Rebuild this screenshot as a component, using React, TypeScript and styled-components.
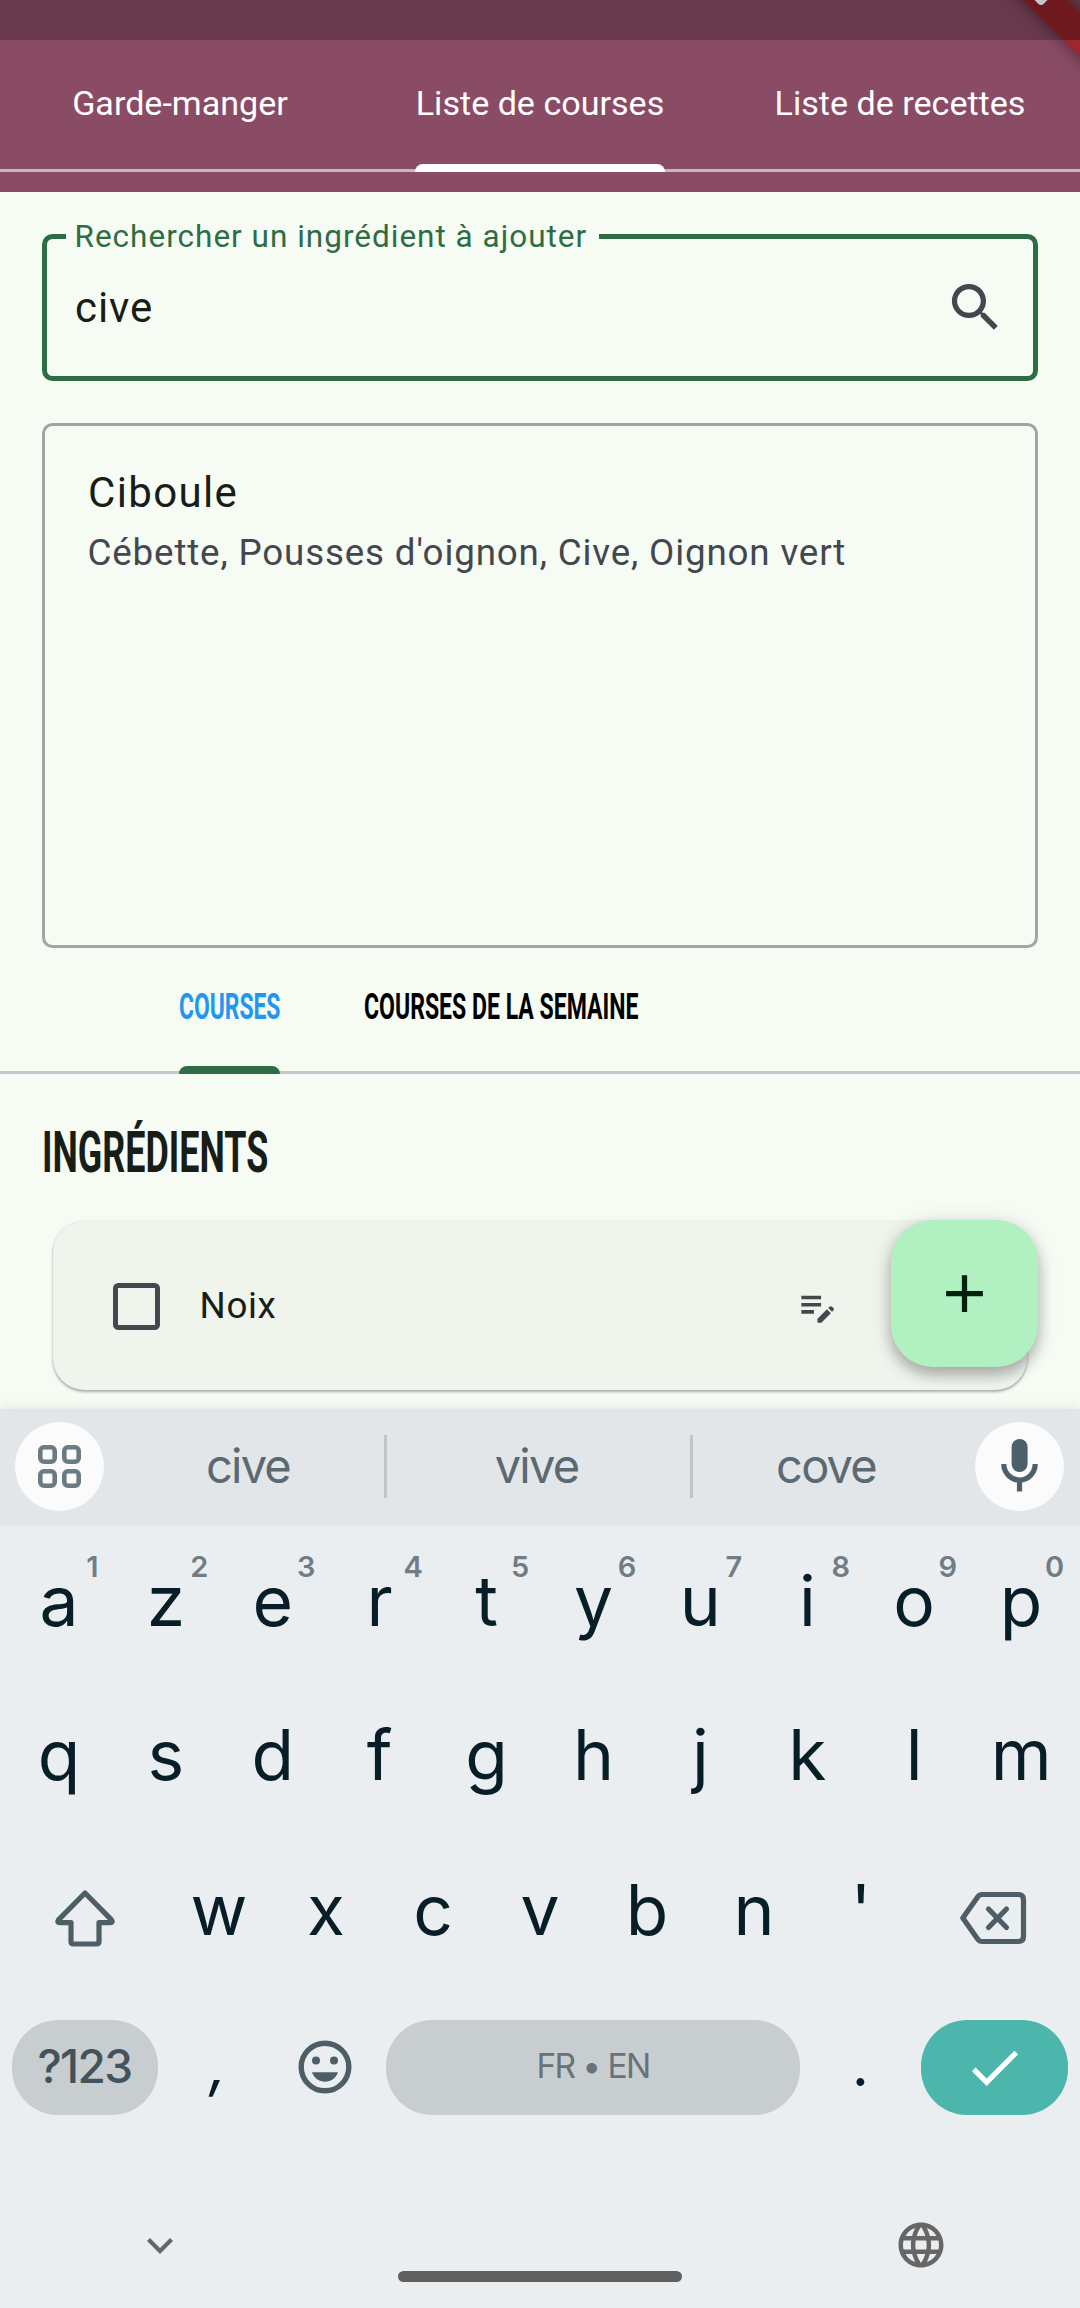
import React from "react";
import styled, { createGlobalStyle } from "styled-components";

const GlobalStyle = createGlobalStyle`
  * { box-sizing: border-box; }
  html, body { margin: 0; padding: 0; background: #ebeef1; }
  body { font-family: Roboto, "Liberation Sans", sans-serif; }
`;

const Screen = styled.div`
  position: relative;
  display: flex;
  flex-direction: column;
  width: 1080px;
  height: 2308px;
  overflow: hidden;
  background: #f6fbf4;
`;

/* ---------- Header ---------- */

const Header = styled.header`
  height: 192px;
  flex: none;
  background: #8a4b65;
`;

const StatusBar = styled.div`
  height: 40px;
  background: #68384b;
`;

const HeaderTabs = styled.nav`
  display: flex;
  height: 131.5px;
  border-bottom: 3px solid #c0b9c8;
`;

const HeaderTab = styled.div`
  flex: 1;
  display: flex;
  justify-content: center;
`;

const HeaderTabLabel = styled.span<{ $active?: boolean }>`
  position: relative;
  height: 131.5px;
  padding-top: 1px;
  line-height: 125px;
  font-size: 34.1px;
  white-space: nowrap;
  color: #fff;
  &::after {
    content: "";
    display: ${(p) => (p.$active ? "block" : "none")};
    position: absolute;
    left: -1px;
    right: -1px;
    bottom: 0;
    height: 8px;
    border-radius: 8px 8px 0 0;
    background: #fff;
  }
`;

const RibbonClip = styled.div`
  position: absolute;
  top: 0;
  right: 0;
  width: 140px;
  height: 120px;
  overflow: hidden;
`;

const Ribbon = styled.div`
  position: absolute;
  left: 6px;
  top: -15.5px;
  width: 200px;
  height: 31px;
  transform: rotate(45deg);
  background: #9d262f;
  box-shadow: 0 0 16px rgba(0, 0, 0, 0.45);
`;

const RibbonShade = styled.div`
  position: absolute;
  inset: 0 0 auto 0;
  height: 40px;
  overflow: hidden;
`;

const RibbonDark = styled(Ribbon)`
  background: #6f1a1e;
  box-shadow: none;
`;

const RibbonMark = styled.div`
  position: absolute;
  left: 95px;
  top: -8px;
  width: 12px;
  height: 12px;
  border-radius: 4px;
  transform: rotate(45deg);
  background: #c9c5c6;
`;

/* ---------- Body ---------- */

const Main = styled.main`
  position: relative;
  height: 1217px;
  flex: none;
  overflow: hidden;
  padding-top: 42px;
`;

const SearchField = styled.div`
  position: relative;
  display: flex;
  align-items: center;
  justify-content: space-between;
  height: 147px;
  margin: 0 42px;
  padding: 0 26.5px 0 28px;
  border: 5.25px solid #2e6d44;
  border-radius: 10.5px;
`;

const SearchLabel = styled.label`
  position: absolute;
  left: 19px;
  top: -22px;
  width: 533px;
  padding-left: 8.5px;
  line-height: 39px;
  font-size: 31.5px;
  letter-spacing: 1px;
  white-space: nowrap;
  color: #2e6d44;
  background: #f6fbf4;
`;

const SearchValue = styled.span`
  font-size: 42px;
  line-height: 60px;
  letter-spacing: 0.9px;
  color: #191d17;
`;

const Icon = styled.svg<{ $size: number }>`
  display: block;
  flex: none;
  width: ${(p) => p.$size}px;
  height: ${(p) => p.$size}px;
`;

const Results = styled.section`
  height: 525px;
  margin: 42px 42px 0;
  padding: 35px 42.5px;
  border: 3px solid #a3a5a2;
  border-radius: 10.5px;
`;

const ResultTitle = styled.div`
  padding-left: 0.5px;
  font-size: 42px;
  line-height: 64px;
  letter-spacing: 1.35px;
  color: #191d17;
`;

const ResultAliases = styled.div`
  font-size: 36.75px;
  line-height: 55px;
  letter-spacing: 0.84px;
  white-space: nowrap;
  color: #43474e;
`;

const ListTabs = styled.nav`
  display: flex;
  gap: 84px;
  height: 126px;
  padding-left: 178.5px;
  border-bottom: 3px solid #c3c8d0;
`;

const ListTab = styled.div<{ $active?: boolean; $width: number }>`
  position: relative;
  width: ${(p) => p.$width}px;
  height: 126px;
  padding-top: 36.5px;
  color: ${(p) => (p.$active ? "#2196f3" : "#000")};
  &::after {
    content: "";
    display: ${(p) => (p.$active ? "block" : "none")};
    position: absolute;
    left: 0;
    right: 0;
    bottom: 0;
    height: 8px;
    border-radius: 8px 8px 0 0;
    background: #2e6d44;
  }
`;

const Condensed = styled.span<{ $size: number; $stretch: number }>`
  display: block;
  width: max-content;
  font-size: ${(p) => p.$size}px;
  line-height: 44px;
  font-weight: 700;
  white-space: nowrap;
  transform: scaleX(${(p) => p.$stretch});
  transform-origin: left center;
`;

const SectionTitle = styled.h2`
  margin: 57px 0 0 42px;
  height: 90px;
  color: #191d17;
`;

const ItemCard = styled.article`
  display: flex;
  align-items: center;
  width: 974px;
  height: 169px;
  margin-left: 53px;
  padding: 1px 0 0 60px;
  border-radius: 31.5px;
  background: #eff4ed;
  box-shadow: 0 2px 3px rgba(0, 0, 0, 0.3), 0 0 2px rgba(0, 0, 0, 0.1);
`;

const Checkbox = styled.span`
  width: 47px;
  height: 47px;
  flex: none;
  border: 5.25px solid #43474e;
  border-radius: 5.25px;
`;

const ItemName = styled.span`
  width: 636px;
  flex: none;
  padding: 0 0 1px 39.5px;
  font-size: 36.75px;
  letter-spacing: 0.66px;
  color: #191d17;
`;

const Fab = styled.button`
  position: absolute;
  left: 891px;
  top: 1028px;
  display: flex;
  align-items: center;
  justify-content: center;
  width: 147px;
  height: 147px;
  padding: 0;
  border: 0;
  border-radius: 42px;
  background: #b1f1c1;
  box-shadow: 0 8px 14px rgba(0, 0, 0, 0.24), 0 3px 22px rgba(0, 0, 0, 0.13);
`;

/* ---------- Keyboard ---------- */

const Keyboard = styled.section`
  position: relative;
  display: flex;
  flex-direction: column;
  flex: 1;
  background: #ebeef1;
  box-shadow: 0 0 12px rgba(0, 0, 0, 0.1);
  font-family: Inter, Roboto, sans-serif;
`;

const Suggestions = styled.div`
  display: flex;
  align-items: center;
  height: 116px;
  padding: 0 15px 1px;
  background: #e3e6e9;
`;

const RoundButton = styled.span`
  display: flex;
  align-items: center;
  justify-content: center;
  width: 89px;
  height: 89px;
  flex: none;
  border-radius: 50%;
  background: #fbfbfb;
`;

const Suggestion = styled.span<{ $width: number; $nudge: number }>`
  width: ${(p) => p.$width}px;
  flex: none;
  padding-left: ${(p) => Math.max(p.$nudge, 0)}px;
  padding-right: ${(p) => Math.max(-p.$nudge, 0)}px;
  text-align: center;
  font-size: 47px;
  line-height: 58px;
  padding-bottom: 2px;
  letter-spacing: -1.8px;
  color: #5b6a72;
`;

const Separator = styled.span`
  width: 3px;
  height: 63px;
  flex: none;
  background: #c1c5c9;
`;

const KeyRow = styled.div`
  display: flex;
  height: 154.4px;
  padding: 0 5.5px;
`;

const Key = styled.span`
  position: relative;
  flex: 1;
  text-align: center;
  font-size: 69.5px;
  line-height: 152px;
  color: #071e28;
`;

const KeyHint = styled.sup`
  position: absolute;
  left: 72px;
  top: 26px;
  width: 30px;
  font-size: 29px;
  line-height: 32px;
  font-weight: 600;
  text-align: center;
  color: #717d84;
`;

const WideKey = styled.span<{ $pull?: number }>`
  display: flex;
  align-items: center;
  justify-content: center;
  width: 160px;
  flex: none;
  padding: 15px ${(p) => p.$pull ?? 0}px 0 0;
`;

const BottomRow = styled.div`
  display: flex;
  align-items: center;
  height: 95px;
  margin-top: 31.8px;
  padding: 0 12px;
`;

const Pill = styled.span<{ $width: number; $bg: string }>`
  display: flex;
  align-items: center;
  justify-content: center;
  width: ${(p) => p.$width}px;
  height: 95px;
  flex: none;
  border-radius: 46px;
  background: ${(p) => p.$bg};
`;

const SymbolsLabel = styled.span`
  padding: 0 1px 3px 0;
  font-size: 46px;
  font-weight: 500;
  letter-spacing: -1.6px;
  color: #43535b;
`;

const LanguageLabel = styled.span`
  padding-bottom: 2px;
  font-size: 33.5px;
  letter-spacing: -1.6px;
  color: #66737a;
`;

const Punctuation = styled.span<{ $width: number; $slanted?: boolean }>`
  width: ${(p) => p.$width}px;
  flex: none;
  text-align: center;
  font-size: 60px;
  font-style: ${(p) => (p.$slanted ? "italic" : "normal")};
  line-height: 89px;
  height: 95px;
  color: #071e28;
`;

const EmojiKey = styled.span`
  display: flex;
  justify-content: center;
  width: 94px;
  margin-right: 14px;
  flex: none;
`;

const NavBar = styled.div`
  display: grid;
  grid-template-columns: 398px 284px 398px;
  height: 193px;
  padding-top: 99px;
`;

const NavSlot = styled.span<{ $left: number; $top?: number }>`
  padding: ${(p) => p.$top ?? 0}px 0 0 ${(p) => p.$left}px;
`;

const HomeBar = styled.span`
  height: 11px;
  margin-top: 57px;
  border-radius: 5.5px;
  background: #5f605f;
`;

const rowOne = ["a", "z", "e", "r", "t", "y", "u", "i", "o", "p"];
const rowTwo = ["q", "s", "d", "f", "g", "h", "j", "k", "l", "m"];
const rowThree = ["w", "x", "c", "v", "b", "n", "'"];

export default function App() {
  return (
    <>
      <GlobalStyle />
      <Screen>
        <Header>
          <StatusBar />
          <HeaderTabs>
            <HeaderTab><HeaderTabLabel>Garde-manger</HeaderTabLabel></HeaderTab>
            <HeaderTab><HeaderTabLabel $active>Liste de courses</HeaderTabLabel></HeaderTab>
            <HeaderTab><HeaderTabLabel>Liste de recettes</HeaderTabLabel></HeaderTab>
          </HeaderTabs>
        </Header>
        <RibbonClip>
          <Ribbon />
          <RibbonShade>
            <RibbonDark />
            <RibbonMark />
          </RibbonShade>
        </RibbonClip>

        <Main>
          <SearchField>
            <SearchLabel>Rechercher un ingrédient à ajouter</SearchLabel>
            <SearchValue>cive</SearchValue>
            <Icon $size={63} viewBox="0 0 24 24" fill="#43474e">
              <path d="M15.5 14h-.79l-.28-.27A6.471 6.471 0 0 0 16 9.5 6.5 6.5 0 1 0 9.5 16c1.61 0 3.09-.59 4.23-1.57l.27.28v.79l5 4.99L20.49 19l-4.99-5zm-6 0C7.01 14 5 11.99 5 9.5S7.01 5 9.5 5 14 7.01 14 9.5 11.99 14 9.5 14z" />
            </Icon>
          </SearchField>

          <Results>
            <ResultTitle>Ciboule</ResultTitle>
            <ResultAliases>Cébette, Pousses d'oignon, Cive, Oignon vert</ResultAliases>
          </Results>

          <ListTabs>
            <ListTab $active $width={101.5}>
              <Condensed $size={36.6} $stretch={0.625}>COURSES</Condensed>
            </ListTab>
            <ListTab $width={277}>
              <Condensed $size={36.6} $stretch={0.63}>COURSES DE LA SEMAINE</Condensed>
            </ListTab>
          </ListTabs>

          <SectionTitle>
            <Condensed $size={56.5} $stretch={0.635}>INGRÉDIENTS</Condensed>
          </SectionTitle>

          <ItemCard>
            <Checkbox />
            <ItemName>Noix</ItemName>
            <Icon $size={43} viewBox="0 0 24 24" fill="#43474e">
              <path d="M3 10h11v2H3v-2zm0-2h11V6H3v2zm0 8h7v-2H3v2zm15.01-3.13.71-.71a.996.996 0 0 1 1.41 0l.71.71c.39.39.39 1.02 0 1.41l-.71.71-2.12-2.12zm-.71.71-5.3 5.3V21h2.12l5.3-5.3-2.12-2.12z" />
            </Icon>
          </ItemCard>

          <Fab>
            <Icon $size={63} viewBox="0 0 24 24" fill="#00210e">
              <path d="M19 13h-6v6h-2v-6H5v-2h6V5h2v6h6v2z" />
            </Icon>
          </Fab>
        </Main>

        <Keyboard>
          <Suggestions>
            <RoundButton>
              <Icon $size={43} viewBox="0 0 43 43" fill="none" stroke="#6a7b83" strokeWidth={4.6}>
                <rect x="2.3" y="2.3" width="14.4" height="14.4" rx="3.6" />
                <rect x="26.3" y="2.3" width="14.4" height="14.4" rx="3.6" />
                <rect x="2.3" y="26.3" width="14.4" height="14.4" rx="3.6" />
                <rect x="26.3" y="26.3" width="14.4" height="14.4" rx="3.6" />
              </Icon>
            </RoundButton>
            <Suggestion $width={280} $nudge={8}>cive</Suggestion>
            <Separator />
            <Suggestion $width={303} $nudge={-4}>vive</Suggestion>
            <Separator />
            <Suggestion $width={282} $nudge={-16}>cove</Suggestion>
            <RoundButton>
              <Icon $size={63} viewBox="0 0 63 63" fill="none" stroke="#4d5f68">
                <rect x="23.6" y="4" width="16" height="33" rx="8" fill="#4d5f68" stroke="none" />
                <path d="M15.8 29 A15.7 16 0 0 0 47.2 29" strokeWidth={5.2} />
                <path d="M31.5 45v11.5" strokeWidth={5.2} />
              </Icon>
            </RoundButton>
          </Suggestions>

          <KeyRow>
            {rowOne.map((k, i) => (
              <Key key={k}>
                {k}
                <KeyHint>{(i + 1) % 10}</KeyHint>
              </Key>
            ))}
          </KeyRow>
          <KeyRow>
            {rowTwo.map((k) => <Key key={k}>{k}</Key>)}
          </KeyRow>
          <KeyRow>
            <WideKey $pull={2}>
              <Icon $size={64} viewBox="0 0 64 64" fill="none" stroke="#4d5e66" strokeWidth={5.2} strokeLinejoin="round">
                <path d="M32 7 L5.5 33.8 Q3.6 36.7 7.5 36.7 H18 V55.5 Q18 58 20.5 58 H43.5 Q46 58 46 55.5 V36.7 H56.5 Q60.4 36.7 58.5 33.8 Z" />
              </Icon>
            </WideKey>
            {rowThree.map((k) => <Key key={k}>{k}</Key>)}
            <WideKey $pull={4}>
              <Icon $size={68} viewBox="0 0 68 68" fill="none" stroke="#4d5e66" strokeWidth={5.2} strokeLinecap="round" strokeLinejoin="round">
                <path d="M23 10.5 H59.5 Q64.5 10.5 64.5 15.5 V52.5 Q64.5 57.5 59.5 57.5 H23 Q20.5 57.5 19 55.5 L3.8 34 L19 12.5 Q20.5 10.5 23 10.5 Z" />
                <path d="M29.5 25 L47.5 43.5 M47.5 25 L29.5 43.5" />
              </Icon>
            </WideKey>
          </KeyRow>

          <BottomRow>
            <Pill $width={146} $bg="#c8cdd0"><SymbolsLabel>?123</SymbolsLabel></Pill>
            <Punctuation $width={120} $slanted>,</Punctuation>
            <EmojiKey>
              <Icon $size={54} viewBox="0 0 54 54" fill="#4d5e66">
                <circle cx="27" cy="27" r="23.8" fill="none" stroke="#4d5e66" strokeWidth={5.4} />
                <circle cx="18" cy="20.5" r="4" />
                <circle cx="36" cy="20.5" r="4" />
                <path d="M14 32.3 H40 C38 38 33 41.8 27 41.8 S16 38 14 32.3 Z" />
              </Icon>
            </EmojiKey>
            <Pill $width={414} $bg="#c8cdd0"><LanguageLabel>FR • EN</LanguageLabel></Pill>
            <Punctuation $width={121}>.</Punctuation>
            <Pill $width={147} $bg="#4db6ac">
              <Icon $size={63} viewBox="0 0 24 24" fill="#fff">
                <path d="M9 16.17 4.83 12l-1.42 1.41L9 19 21 7l-1.41-1.41z" />
              </Icon>
            </Pill>
          </BottomRow>

          <NavBar>
            <NavSlot $left={139}>
              <Icon $size={63} viewBox="0 0 63 63" fill="none" stroke="#666" strokeWidth={4.2}>
                <path d="M9.5 25.5 L21 37 L32.5 25.5" />
              </Icon>
            </NavSlot>
            <HomeBar />
            <NavSlot $left={211.5} $top={4.5}>
              <Icon $size={54} viewBox="0 0 24 24" fill="#666">
                <path d="M11.99 2C6.47 2 2 6.48 2 12s4.47 10 9.99 10C17.52 22 22 17.52 22 12S17.52 2 11.99 2zm6.93 6h-2.95a15.65 15.65 0 0 0-1.38-3.56A8.03 8.03 0 0 1 18.92 8zM12 4.04c.83 1.2 1.48 2.53 1.91 3.96h-3.82c.43-1.43 1.08-2.76 1.91-3.96zM4.26 14C4.1 13.36 4 12.69 4 12s.1-1.36.26-2h3.38c-.08.66-.14 1.32-.14 2s.06 1.34.14 2H4.26zm.82 2h2.95c.32 1.25.78 2.45 1.38 3.56A7.987 7.987 0 0 1 5.08 16zm2.95-8H5.08a7.987 7.987 0 0 1 4.33-3.56A15.65 15.65 0 0 0 8.03 8zM12 19.96c-.83-1.2-1.48-2.53-1.91-3.96h3.82c-.43 1.43-1.08 2.76-1.91 3.96zM14.34 14H9.66c-.09-.66-.16-1.32-.16-2s.07-1.35.16-2h4.68c.09.65.16 1.32.16 2s-.07 1.34-.16 2zm.25 5.56c.6-1.11 1.06-2.31 1.38-3.56h2.95a8.03 8.03 0 0 1-4.33 3.56zM16.36 14c.08-.66.14-1.32.14-2s-.06-1.34-.14-2h3.38c.16.64.26 1.31.26 2s-.1 1.36-.26 2h-3.38z" />
              </Icon>
            </NavSlot>
          </NavBar>
        </Keyboard>
      </Screen>
    </>
  );
}
